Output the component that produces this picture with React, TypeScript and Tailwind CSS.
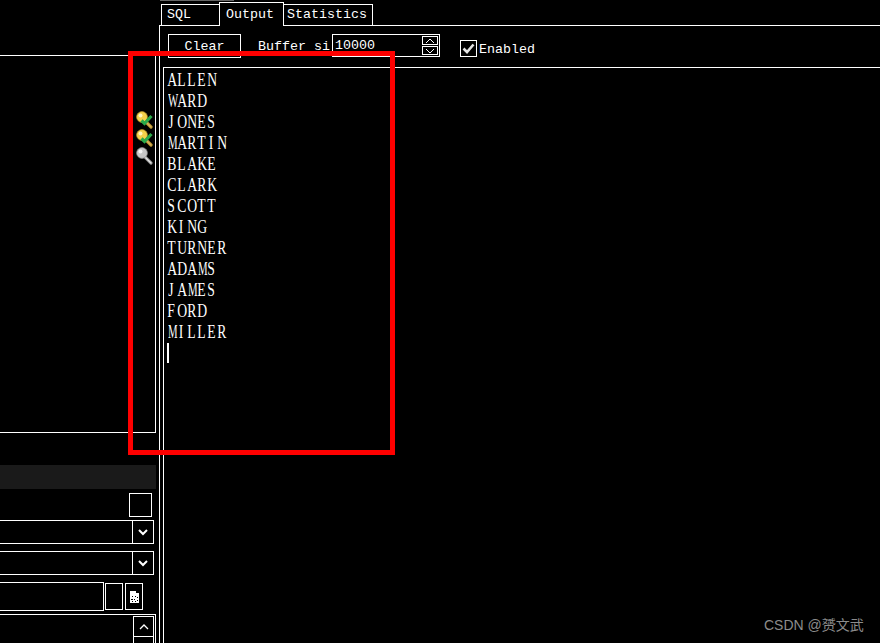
import React from "react";

const names = ["ALLEN","WARD","JONES","MARTIN","BLAKE","CLARK","SCOTT","KING","TURNER","ADAMS","JAMES","FORD","MILLER"];

function Big({ text }: { text: string }) {
  return (
    <>
      {text.split("").map((c, i) => (
        <span key={i} className={c === "M" || c === "W" ? "inline-block w-[10px] scale-x-[0.6] text-center" : "inline-block w-[10px] scale-x-[0.76] text-center"}>{c}</span>
      ))}
    </>
  );
}

function KeyIcon({ active }: { active: boolean }) {
  const body = active ? "#f4d04a" : "#c8c8c8";
  const dark = active ? "#b8942c" : "#8a8a8a";
  return (
    <svg width="17" height="18" viewBox="0 0 17 18" className="block">
      <path d="M8 9 L15 16" stroke={dark} strokeWidth="3.2" strokeLinecap="round" />
      <path d="M8 9 L15 16" stroke={active ? "#d8b060" : "#e4e4e4"} strokeWidth="1.5" strokeLinecap="round" />
      <circle cx="6" cy="6" r="5.4" fill={body} stroke={dark} strokeWidth="0.7" />
      <circle cx="4.5" cy="4.5" r="2" fill={active ? "#fff6c0" : "#f4f4f4"} />
      {active && <path d="M5.5 9.5 L8.5 12.5 L15.5 5" fill="none" stroke="#2aa84a" strokeWidth="3.2" />}
    </svg>
  );
}

function Chevron({ up }: { up?: boolean }) {
  return (
    <svg width="10" height="7" viewBox="0 0 10 7" className="block">
      <path d={up ? "M1 6 L5 2 L9 6" : "M1 1 L5 5 L9 1"} fill="none" stroke="#fff" strokeWidth={up ? 1.3 : 2} />
    </svg>
  );
}

function SelectBox() {
  return (
    <div className="flex h-[24px] w-[154px] shrink-0 justify-end border-y border-r border-white">
      <div className="flex w-[21px] items-center justify-center border-l border-white">
        <Chevron />
      </div>
    </div>
  );
}

export default function App() {
  return (
    <div className="relative flex h-[643px] w-[880px] overflow-hidden bg-black text-white [font-family:'Liberation_Mono',monospace]">
      <aside className="flex w-[159px] shrink-0 flex-col pt-[55px]">
        <div className="flex h-[378px] w-[156px] shrink-0 flex-col items-end border-y border-r border-white pt-[55px] pr-[2px]">
          <KeyIcon active />
          <KeyIcon active />
          <KeyIcon active={false} />
        </div>
        <div className="mt-[32px] h-[24px] w-[156px] shrink-0 bg-[#1a1a1a]" />
        <div className="mt-[4px] flex w-[152px] shrink-0 justify-end">
          <div className="h-[24px] w-[23px] border border-white" />
        </div>
        <div className="mt-[3px]"><SelectBox /></div>
        <div className="mt-[7px]"><SelectBox /></div>
        <div className="mt-[7px] flex shrink-0 items-center">
          <div className="h-[29px] w-[104px] border-y border-r border-white" />
          <div className="ml-[1px] h-[27px] w-[18px] border border-white" />
          <div className="ml-[2px] flex h-[27px] w-[18px] items-center justify-center border border-white">
            <svg width="9" height="12" viewBox="0 0 9 12" className="block">
              <path d="M0 0H6V2H9V12H0Z" fill="#fff" />
              <path d="M2 5h1v1H2zM5 5h1v1H5zM7 6h1v1H7zM1 8h2v1H1zM4 8h1v1H4zM7 9h1v1H7zM2 10h1v1H2zM5 10h1v1H5z" fill="#000" />
            </svg>
          </div>
        </div>
        <div className="mt-[3px] w-[156px] flex-1 border-t border-r border-white pt-[1px]">
          <div className="ml-[133px] w-[21px] border border-white">
            <div className="flex h-[20px] items-center justify-center border-b border-white">
              <Chevron up />
            </div>
            <div className="h-[20px]" />
          </div>
        </div>
      </aside>

      <main className="flex min-w-0 flex-1 flex-col text-[13.33px] font-light">
        <div className="ml-px h-px w-[74px] shrink-0 bg-[#666666]" />
        <div className="flex h-[24px] shrink-0 items-end pl-[2px]">
          <div className="flex h-[21px] w-[59px] items-center border-x border-t border-white pl-[5px]">SQL</div>
          <div className="relative z-10 -mb-px -ml-px flex h-[24px] w-[65px] items-start border-x border-t border-white bg-black pt-[2px] pl-[6px]">Output</div>
          <div className="-ml-px flex h-[21px] w-[90px] items-center border-x border-t border-white pl-[3px]">Statistics</div>
        </div>
        <div className="flex min-h-0 flex-1 flex-col border-t border-l border-white pl-[3px]">
          <div className="flex h-[41px] shrink-0 items-start pt-[8px]">
            <button className="ml-[5px] h-[24px] w-[73px] border border-white pt-[2px]">Clear</button>
            <span className="mt-[3px] ml-[17px] w-[74px] whitespace-nowrap">Buffer si</span>
            <div className="flex h-[23px] w-[108px] items-center justify-between border border-white pr-px pl-[2px]">
              <span>10000</span>
              <div className="flex flex-col gap-px">
                <div className="flex h-[9px] w-[16px] items-center justify-center border border-white"><svg width="10" height="6" viewBox="0 0 10 6"><path d="M1 5L5 1L9 5" fill="none" stroke="#fff" /></svg></div>
                <div className="flex h-[9px] w-[16px] items-center justify-center border border-white"><svg width="10" height="6" viewBox="0 0 10 6"><path d="M1 1L5 5L9 1" fill="none" stroke="#fff" /></svg></div>
              </div>
            </div>
            <div className="mt-[6px] ml-[20px] flex h-[17px] w-[17px] items-center justify-center border border-white">
              <svg width="13" height="11" viewBox="0 0 13 11"><path d="M1.5 5.5L5 9L11.5 1.5" fill="none" stroke="#e4e4e4" strokeWidth="2.6" /></svg>
            </div>
            <span className="mt-[6px] ml-[2px]">Enabled</span>
          </div>
          <div className="flex-1 border-t border-l border-white pt-[2px] pl-[2px] text-[18px] leading-[21px] [font-family:'Liberation_Serif',serif]">
            {names.map((n) => <div key={n} className="h-[21px] whitespace-nowrap"><Big text={n} /></div>)}
            <div className="ml-px h-[20px] w-[2px] bg-white" />
          </div>
        </div>
      </main>

      <div className="pointer-events-none absolute top-[51px] left-[128px] h-[404px] w-[267px] border-[5px] border-[#ff0000]" />
      <div className="absolute top-[615px] left-[764px] text-[14px] leading-[20px] text-[#8c8c8c] [font-family:'Liberation_Sans','Noto_Sans_CJK_SC',sans-serif]">CSDN @赟文武</div>
    </div>
  );
}
